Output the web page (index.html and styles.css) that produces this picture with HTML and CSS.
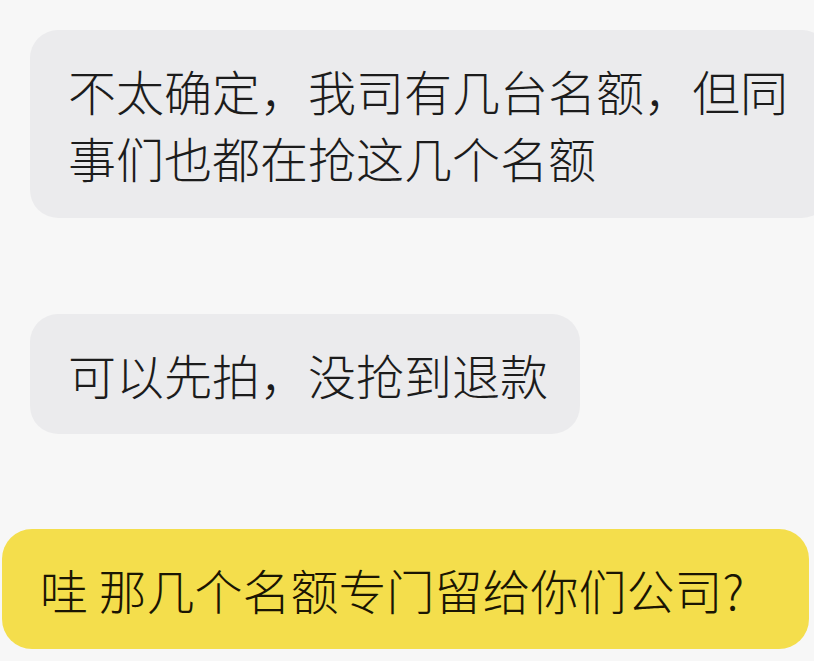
FILE: index.html
```html
<!DOCTYPE html>
<html lang="zh-CN">

<head>
    <meta charset="UTF-8">
    <meta name="viewport" content="width=device-width, initial-scale=1.0">
    <title>聊天</title>
    <link rel="stylesheet" href="styles.css">
</head>

<body>
    <div class="chat">
        <!-- 对方消息 -->
        <div class="bubble bubble-wide">不太确定，我司有几台名额，但同事们也都在抢这几个名额</div>
        <div class="bubble bubble-short">可以先拍，没抢到退款</div>

        <!-- 自己的消息 -->
        <div class="bubble bubble-mine">哇 那几个名额专门留给你们公司?</div>
    </div>
</body>

</html>
```

FILE: styles.css
```css
html, body {
    margin: 0;
    padding: 0;
}

body {
    font-family: "Noto Sans CJK SC", "Noto Sans", sans-serif;
    font-weight: 300;
    background-color: #f7f7f7;
    color: #1c1c1c;
    width: 814px;
    height: 661px;
    overflow: hidden;
}

.chat {
    display: flex;
    flex-direction: column;
    align-items: flex-start;
    padding-top: 30px;
}

.bubble {
    font-size: 48px;
    line-height: 66px;
    padding: 27px 32px 27px 38px;
    border-radius: 28px;
    background-color: #ebebed;
    box-sizing: border-box;
}

.bubble-wide {
    margin-left: 30px;
    width: 800px;
    flex-shrink: 0;
    line-height: 67px;
}

.bubble-short {
    margin-left: 30px;
    margin-top: 96px;
}

.bubble-mine {
    margin-left: 2px;
    margin-top: 95px;
    width: 807px;
    background-color: #f4de4c;
    color: #1a1503;
    border-radius: 30px;
}
```
